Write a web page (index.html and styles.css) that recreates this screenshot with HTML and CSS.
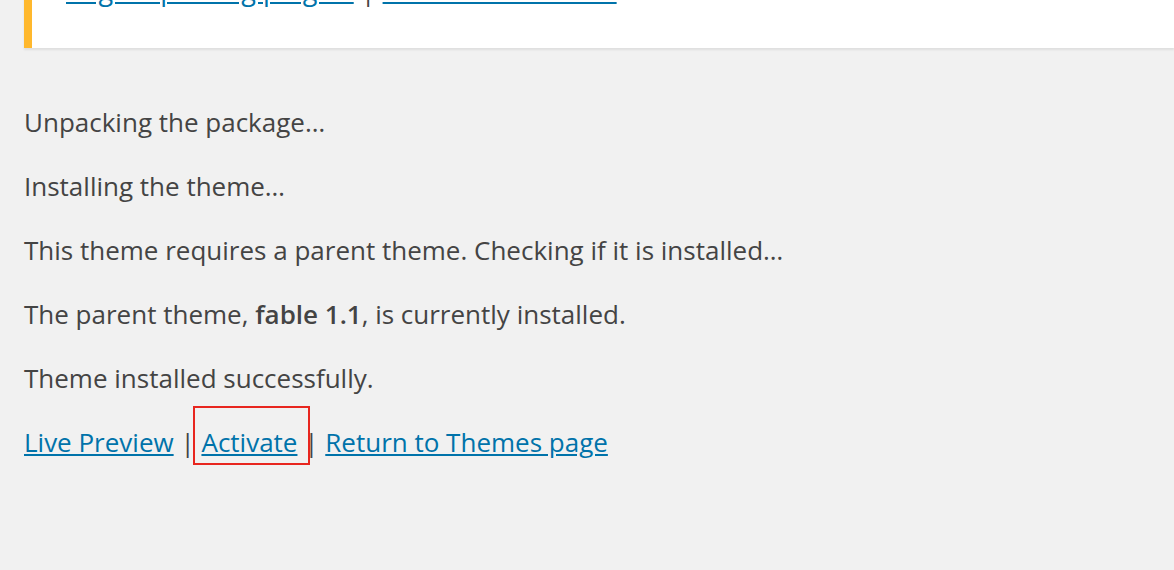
FILE: index.html
```html
<!DOCTYPE html>
<html lang="en">
<head>
<meta charset="utf-8">
<title>Install Theme</title>
<link rel="stylesheet" href="styles.css">
</head>
<body>
<div class="wrap">
  <div class="notice">
    <p><a href="#">Begin updating plugins</a> | <a href="#">Dismiss this notice</a></p>
  </div>
  <div class="log">
    <p>Unpacking the package&hellip;</p>
    <p>Installing the theme&hellip;</p>
    <p>This theme requires a parent theme. Checking if it is installed&hellip;</p>
    <p>The parent theme, <strong>fable 1.1</strong>, is currently installed.</p>
    <p>Theme installed successfully.</p>
    <p class="actions"><a href="#">Live Preview</a> | <span class="highlight"><a href="#">Activate</a></span> | <a href="#">Return to Themes page</a></p>
  </div>
</div>
</body>
</html>
```

FILE: styles.css
```css
html, body {
  margin: 0;
  padding: 0;
  background: #f1f1f1;
  height: 100%;
  overflow: hidden;
}
body {
  font-family: "Open Sans", "Liberation Sans", sans-serif;
  font-size: 26px;
  line-height: 39px;
  color: #444;
}
a {
  color: #0073aa;
  text-decoration: underline;
}
strong {
  font-weight: 600;
}
.wrap {
  padding-left: 24px;
}
.notice {
  margin-top: -32px;
  background: #fff;
  border-left: 8px solid #ffb82d;
  box-shadow: 0 2px 2px rgba(0, 0, 0, 0.08);
  padding: 2px 24px 2px 34px;
}
.notice p {
  margin: 0 0 37px;
  font-size: 27px;
}
.log {
  padding-top: 55px;
}
.log p {
  margin: 0 0 25px;
}
.highlight {
  position: relative;
}
.highlight::after {
  content: "";
  position: absolute;
  left: -8px;
  top: -18px;
  right: -13px;
  bottom: -5px;
  border: 2px solid #e8261f;
}
```
